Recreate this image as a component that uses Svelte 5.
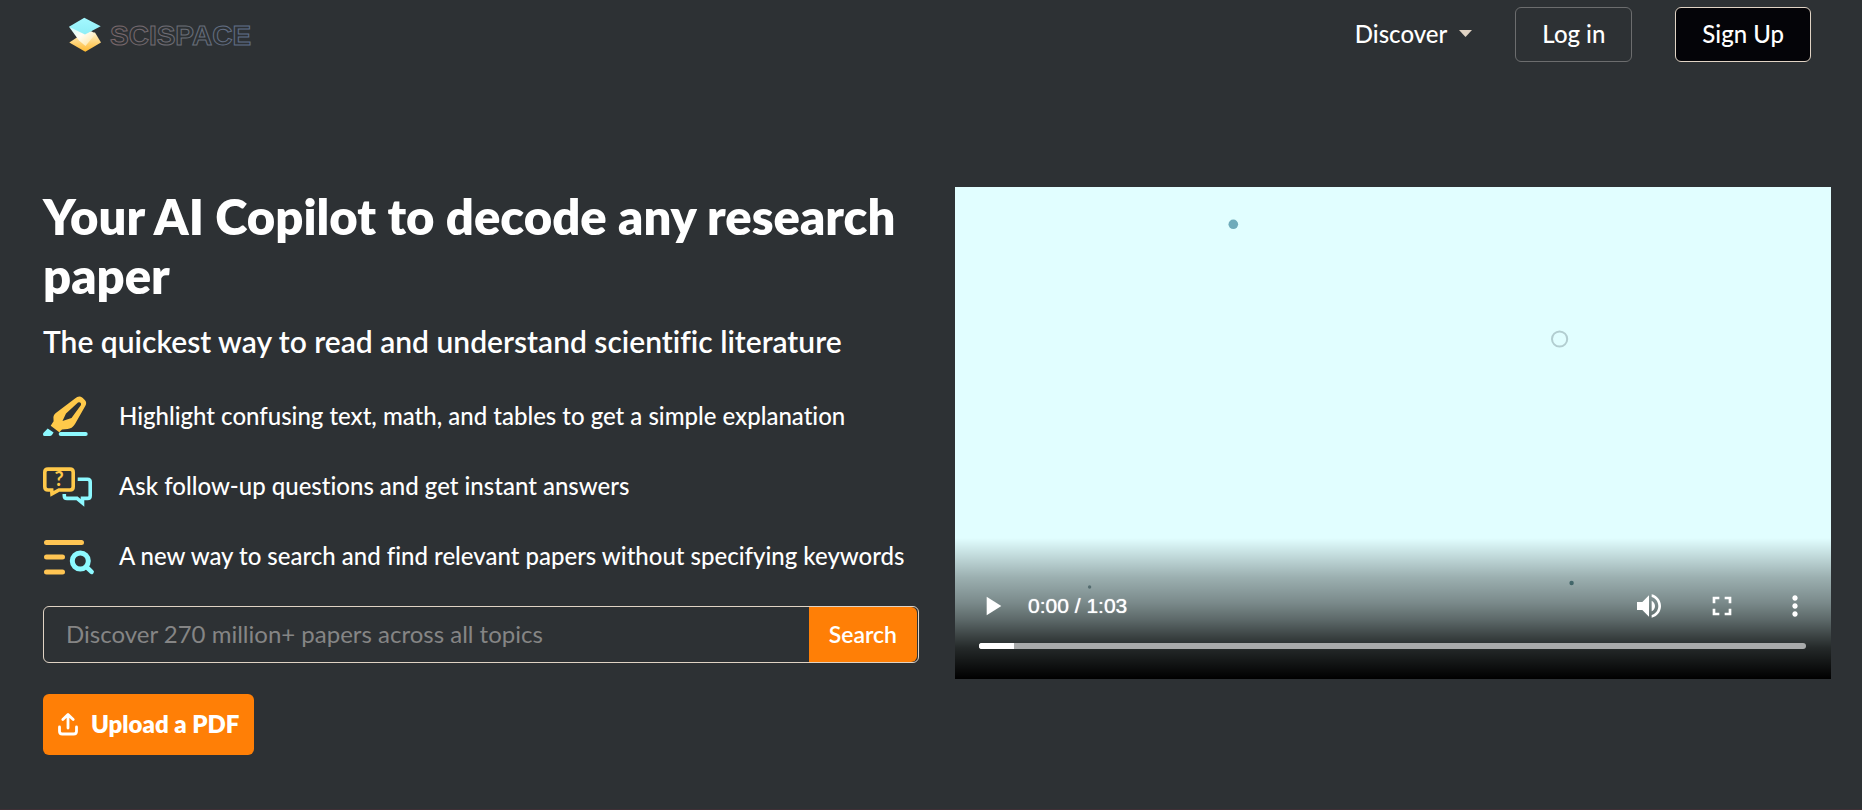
<script>
  let query = $state('');
  let position = $state(0);
</script>

<div class="page">
  <header>
    <a class="logo" href="#home" aria-label="SciSpace home">
      <svg width="36" height="36" viewBox="0 0 36 36" aria-hidden="true">
        <defs>
          <linearGradient id="gold" x1="0" y1="0" x2="0" y2="1">
            <stop offset="0" stop-color="#fff3cf" />
            <stop offset="1" stop-color="#ffb92e" />
          </linearGradient>
          <linearGradient id="sky" x1="0" y1="0" x2="0" y2="1">
            <stop offset="0" stop-color="#a4f8ff" />
            <stop offset="1" stop-color="#8feef6" />
          </linearGradient>
          <linearGradient id="band" x1="0" y1="0" x2="1" y2="1">
            <stop offset="0.1" stop-color="#d5fbfb" />
            <stop offset="0.45" stop-color="#fffdf4" />
            <stop offset="1" stop-color="#ffe296" />
          </linearGradient>
        </defs>
        <path d="M1.3 25.5 17.3 15 27 15.500 33 25.5 17.3 34.8z" fill="url(#gold)" />
        <path d="M1 9.7 24 14.5 27 17.5 17.5 29 11 23.5z" fill="url(#band)" />
        <path d="M16.3.7 32.7 9.3 17 17.500 1 9.7z" fill="url(#sky)" />
      </svg>
      <svg width="148" height="36" viewBox="0 0 148 36" aria-hidden="true">
        <defs>
          <linearGradient id="word" x1="0" x2="1">
            <stop offset="0" stop-color="#7c686b" />
            <stop offset="0.55" stop-color="#6b7079" />
            <stop offset="1" stop-color="#5f7090" />
          </linearGradient>
        </defs>
        <text class="wordmark" x="4" y="28" stroke="url(#word)">SCISPACE</text>
      </svg>
    </a>
    <nav>
      <button class="discover" type="button">
        Discover
        <svg width="13" height="7" viewBox="0 0 13 7" aria-hidden="true"><path d="M0 0h13L6.500 7z" fill="#e0d3c4" /></svg>
      </button>
      <button class="login" type="button">Log in</button>
      <button class="signup" type="button">Sign Up</button>
    </nav>
  </header>

  <main>
    <section class="copy">
      <h1>Your AI Copilot to decode any research paper</h1>
      <p class="lead">The quickest way to read and understand scientific literature</p>
      <ul>
        <li>
          <svg width="52" height="44" viewBox="0 0 52 44" aria-hidden="true">
            <path fill="#ffc94a" fill-rule="evenodd" d="M32 5.500Q36 2 39.500 4.800L41.800 7Q44.200 9.500 42.400 12.800L32 31Q29 35.800 24.500 36L19 36.600 16.300 39.300 7.700 32.700 10.600 28.300 10.400 24Q10.600 22 12.500 20.300zM35 9.500 23 20.500 19.500 28 28.500 25 38 12Q38.400 8.800 35 9.500z" />
            <path fill="#8df9ff" d="M4.700 35.500 10.600 39.600 8.800 42.200 7.200 43H1.600Q0 43 0 41.400 0 40.300.8 39.600z" />
            <path d="M17.700 41h25" stroke="#8df9ff" stroke-width="4" stroke-linecap="round" />
          </svg>
          <span>Highlight confusing text, math, and tables to get a simple explanation</span>
        </li>
        <li>
          <svg width="52" height="44" viewBox="0 0 52 44" fill="none" stroke-width="3.600" aria-hidden="true">
            <path d="M5 6.100h22q3.200 0 3.200 3.200v14.500q0 3.200-3.200 3.200h-11L9 30.800 8.700 27H5q-3.200 0-3.200-3.200V9.300q0-3.200 3.200-3.200z" stroke="#ffc94a" />
            <path d="M34.700 16.200h9.800q2.700 0 2.700 2.700v13.800q0 2.700-2.700 2.700H39.500v4.600L34 35.400H24q-2.700 0-2.700-2.700V31" stroke="#8df9ff" />
            <text class="mark" x="16" y="23" fill="#ffc94a">?</text>
          </svg>
          <span>Ask follow-up questions and get instant answers</span>
        </li>
        <li>
          <svg width="52" height="44" viewBox="0 0 52 44" fill="none" stroke-linecap="round" stroke-width="5" aria-hidden="true">
            <path d="M3.500 9.500h35M3.500 24h16M3.500 39h16" stroke="#ffc553" />
            <circle cx="37.300" cy="28" r="8" stroke="#8df9ff" />
            <path d="M43.500 34 48.600 38.900" stroke="#8df9ff" stroke-width="4.600" />
          </svg>
          <span>A new way to search and find relevant papers without specifying keywords</span>
        </li>
      </ul>
      <form class="search" onsubmit={(e) => e.preventDefault()}>
        <input type="text" bind:value={query} aria-label="Search papers" placeholder="Discover 270 million+ papers across all topics" />
        <button type="submit">Search</button>
      </form>
      <button class="upload" type="button">
        <svg width="20" height="24" viewBox="0 0 20 24" fill="none" stroke="#fff" stroke-width="2.800" stroke-linecap="round" stroke-linejoin="round" aria-hidden="true">
          <path d="M10 16V3M4.800 7.600 10 2.400l5.200 5.200M1.500 15v4.200q0 2.800 2.800 2.800h11.400q2.800 0 2.800-2.800V15" />
        </svg>
        Upload a PDF
      </button>
    </section>

    <section class="player" aria-label="Product video">
      <svg class="frame" viewBox="0 0 876 492" aria-hidden="true">
        <circle cx="278.300" cy="37.300" r="4.800" fill="#6fabba" />
        <circle cx="604.600" cy="152" r="7.600" fill="none" stroke="#b2cdd0" stroke-width="2" />
        <circle cx="616.600" cy="396" r="2.200" fill="#659ba0" />
        <circle cx="134.600" cy="400" r="1.700" fill="#85abb0" />
      </svg>
      <div class="controls">
        <div class="row">
          <button type="button" aria-label="Play">
            <svg viewBox="0 0 24 24"><path d="M8 5v14l11-7z" /></svg>
          </button>
          <span class="time">0:00 / 1:03</span>
          <button type="button" aria-label="Mute">
            <svg viewBox="0 0 24 24"><path d="M3 9v6h4l5 5V4L7 9H3zm13.500 3c0-1.770-1.020-3.290-2.500-4.030v8.050c1.480-.730 2.500-2.250 2.500-4.020zM14 3.230v2.060c2.890.860 5 3.540 5 6.710s-2.110 5.850-5 6.710v2.060c4.010-.910 7-4.490 7-8.770s-2.990-7.860-7-8.770z" /></svg>
          </button>
          <button type="button" aria-label="Full screen">
            <svg viewBox="0 0 24 24"><path d="M7 14H5v5h5v-2H7v-3zm-2-4h2V7h3V5H5v5zm12 7h-3v2h5v-5h-2v3zM14 5v2h3v3h2V5h-5z" /></svg>
          </button>
          <button type="button" aria-label="More options">
            <svg viewBox="0 0 24 24"><path d="M12 8c1.100 0 2-.900 2-2s-.900-2-2-2-2 .900-2 2 .900 2 2 2zm0 2c-1.100 0-2 .900-2 2s.900 2 2 2 2-.900 2-2-.900-2-2-2zm0 6c-1.100 0-2 .900-2 2s.900 2 2 2 2-.900 2-2-.900-2-2-2z" /></svg>
          </button>
        </div>
        <input class="seek" type="range" min="0" max="63" bind:value={position} aria-label="Seek" />
      </div>
    </section>
  </main>
</div>

<style>
  :global(body) {
    margin: 0;
    background: #2d3134;
  }

  .page {
    color: #fff;
    font-family: Lato, 'Open Sans', sans-serif;
    font-weight: 500;
    font-variant-ligatures: no-common-ligatures;
    border-bottom: 1px solid #3f2f35;
  }

  button,
  input {
    box-sizing: border-box;
    margin: 0;
    font: inherit;
    font-variant-ligatures: inherit;
    color: inherit;
  }

  button {
    padding: 0;
    border: 0;
    background: none;
    cursor: pointer;
  }

  svg {
    display: block;
    flex: none;
  }

  header {
    display: flex;
    align-items: center;
    justify-content: space-between;
    padding: 7px 51px 7px 68px;
    font-size: 24px;
  }

  .logo {
    display: flex;
    gap: 2px;
  }

  .wordmark {
    font: 700 28px 'Liberation Sans', Arial, sans-serif;
    fill: #2d3134;
    stroke-width: 1px;
  }

  nav {
    display: flex;
    align-items: center;
    gap: 43px;
  }

  .discover {
    display: flex;
    align-items: center;
    gap: 12px;
    padding-bottom: 2px;
  }

  .login,
  .signup {
    height: 55px;
    padding: 0 26px 2px;
    border: 1px solid #6c6d6e;
    border-radius: 6px;
  }

  .signup {
    border-color: #e0d3c4;
    background: #040408;
  }

  main {
    display: grid;
    grid-template-columns: 1fr 1fr;
    gap: 36px;
    align-items: start;
    padding: 118px 31px 54px 43px;
  }

  h1 {
    margin: 0;
    font-size: 49px;
    line-height: 59px;
    font-weight: 800;
  }

  .lead {
    margin: 18px 0 0;
    font-size: 30px;
    line-height: 36px;
    font-weight: 600;
  }

  ul {
    list-style: none;
    margin: 21px 0 16px;
    padding: 0;
    font-size: 24px;
  }

  li {
    display: flex;
    align-items: center;
    gap: 24px;
    min-height: 70px;
  }

  .mark {
    font: 700 20px Lato, sans-serif;
    text-anchor: middle;
  }

  .search {
    display: flex;
    height: 57px;
    box-sizing: border-box;
    border: 1px solid #e0d3c4;
    border-radius: 6px;
  }

  .search input {
    flex: 1;
    min-width: 0;
    padding: 0 22px 2px;
    border: 0;
    background: none;
    font-size: 24px;
    font-weight: 400;
    outline: none;
  }

  .search input::placeholder {
    color: #858585;
    opacity: 1;
  }

  .search button {
    margin-right: 1px;
    padding: 0 20px 2px;
    border-radius: 0 6px 6px 0;
    background: #ff7f06;
    font-size: 23px;
    font-weight: 600;
  }

  .upload {
    display: flex;
    align-items: center;
    gap: 13px;
    height: 61px;
    margin-top: 31px;
    padding: 0 15px 2px;
    border-radius: 6px;
    background: #ff7f06;
    font-size: 24px;
    font-weight: 800;
  }

  .player {
    display: grid;
    background: #e1feff;
    overflow: hidden;
  }

  .frame {
    grid-area: 1 / 1;
    width: 100%;
  }

  .controls {
    grid-area: 1 / 1;
    align-self: end;
    padding: 36px 0 30px;
    background: linear-gradient(
      rgb(0 0 0 / 0) 0%,
      rgb(0 0 0 / 0.31) 28%,
      rgb(0 0 0 / 0.46) 46%,
      rgb(0 0 0 / 0.59) 58%,
      rgb(0 0 0 / 0.74) 70%,
      rgb(0 0 0 / 0.84) 78%,
      rgb(0 0 0 / 0.92) 89%,
      #000 100%
    );
  }

  .row {
    display: flex;
    align-items: center;
    height: 64px;
  }

  .row button {
    display: grid;
    place-items: center;
    width: 73px;
    height: 64px;
  }

  .row svg {
    width: 32px;
    height: 32px;
    fill: #fff;
  }

  .time {
    flex: 1;
    font: 400 21px 'Liberation Sans', Arial, sans-serif;
    text-shadow: 0 0 1px #fff;
  }

  .seek {
    display: block;
    appearance: none;
    width: calc(100% - 49px);
    height: 6px;
    margin: 5px 25px 0 24px;
    border-radius: 3px;
    background: linear-gradient(90deg, #fff 35px, #a8aaab 35px);
    cursor: pointer;
  }

  .seek::-webkit-slider-thumb {
    appearance: none;
    width: 6px;
    height: 6px;
    border-radius: 3px;
    background: #fff;
  }
</style>
